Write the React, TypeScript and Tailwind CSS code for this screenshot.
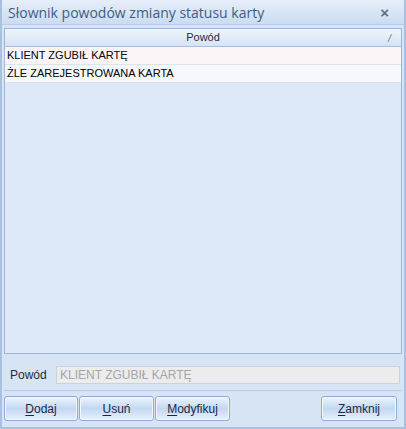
import React from "react";

const font = { fontFamily: '"Liberation Sans", Arial, sans-serif' };

function Btn({ u, rest, className }: { u: string; rest: string; className?: string }) {
  return (
    <button
      className={
        "h-[25px] rounded-[3px] border border-[#8eaad0] bg-gradient-to-b from-[#eef4fc] via-[#c3d8f2] to-[#e6f0fc] text-[12px] text-[#15294b] flex items-center justify-center shadow-[inset_0_0_0_1px_#f4f8fd] " +
        (className || "")
      }
      style={font}
    >
      <span>
        <span className="underline underline-offset-2">{u}</span>
        {rest}
      </span>
    </button>
  );
}

export default function App() {
  return (
    <div
      className="w-[406px] h-[429px] bg-[#d7e4f4] flex flex-col border-x-[2px] border-b-[2px] border-[#a9c0df] overflow-hidden"
      style={font}
    >
      <div className="h-[25px] shrink-0 bg-gradient-to-b from-[#e6eef9] to-[#cbdcf1] flex items-center justify-between pl-[6px] pr-[15px] border-b border-[#b9cde6]">
        <span
          className="text-[14px] text-[#3f5c87]"
          style={{ fontFamily: '"Open Sans", "Liberation Sans", sans-serif' }}
        >
          Słownik powodów zmiany statusu karty
        </span>
        <span className="text-[15px] font-bold text-[#5c6f88] leading-none">×</span>
      </div>
      <div className="flex-1 flex flex-col px-[2px] pt-[3px]">
        <div className="h-[326px] border border-[#9db6d8] bg-[#dde9f8] flex flex-col">
          <div className="h-[18px] shrink-0 bg-gradient-to-b from-[#eef4fb] to-[#d6e3f4] border-b border-[#a6bedd] flex items-center relative">
            <span className="flex-1 text-center text-[11px] text-[#1e2a3c]">Powód</span>
            <span className="absolute right-[10px] top-[1px] text-[11px] text-[#6b7a90] italic">/</span>
          </div>
          <div className="h-[18px] bg-[#fcf5f8] border-b border-[#dbe3ee] flex items-center pl-[2px] text-[11px] text-black">
            KLIENT ZGUBIŁ KARTĘ
          </div>
          <div className="h-[18px] bg-[#f6f8fc] border-b border-[#dbe3ee] flex items-center pl-[2px] text-[11px] text-black">
            ŻLE ZAREJESTROWANA KARTA
          </div>
        </div>
        <div className="h-[37px] flex items-start pt-[12px] border-b border-[#b3c8e4]">
          <span className="w-[52px] pl-[6px] text-[12px] leading-[18px] text-[#1e2a3c]">Powód</span>
          <div className="flex-1 mr-[2px] h-[18px] bg-[#ececec] border border-[#c9d3df] flex items-center pl-[3px] text-[12px] text-[#a0a6ae]">
            KLIENT ZGUBIŁ KARTĘ
          </div>
        </div>
        <div className="flex items-center pt-[5px]">
          <Btn u="D" rest="odaj" className="w-[74px]" />
          <Btn u="U" rest="suń" className="w-[75px] ml-[1px]" />
          <Btn u="M" rest="odyfikuj" className="w-[75px] ml-[1px]" />
          <div className="flex-1" />
          <Btn u="Z" rest="amknij" className="w-[76px] mr-[5px]" />
        </div>
      </div>
    </div>
  );
}
